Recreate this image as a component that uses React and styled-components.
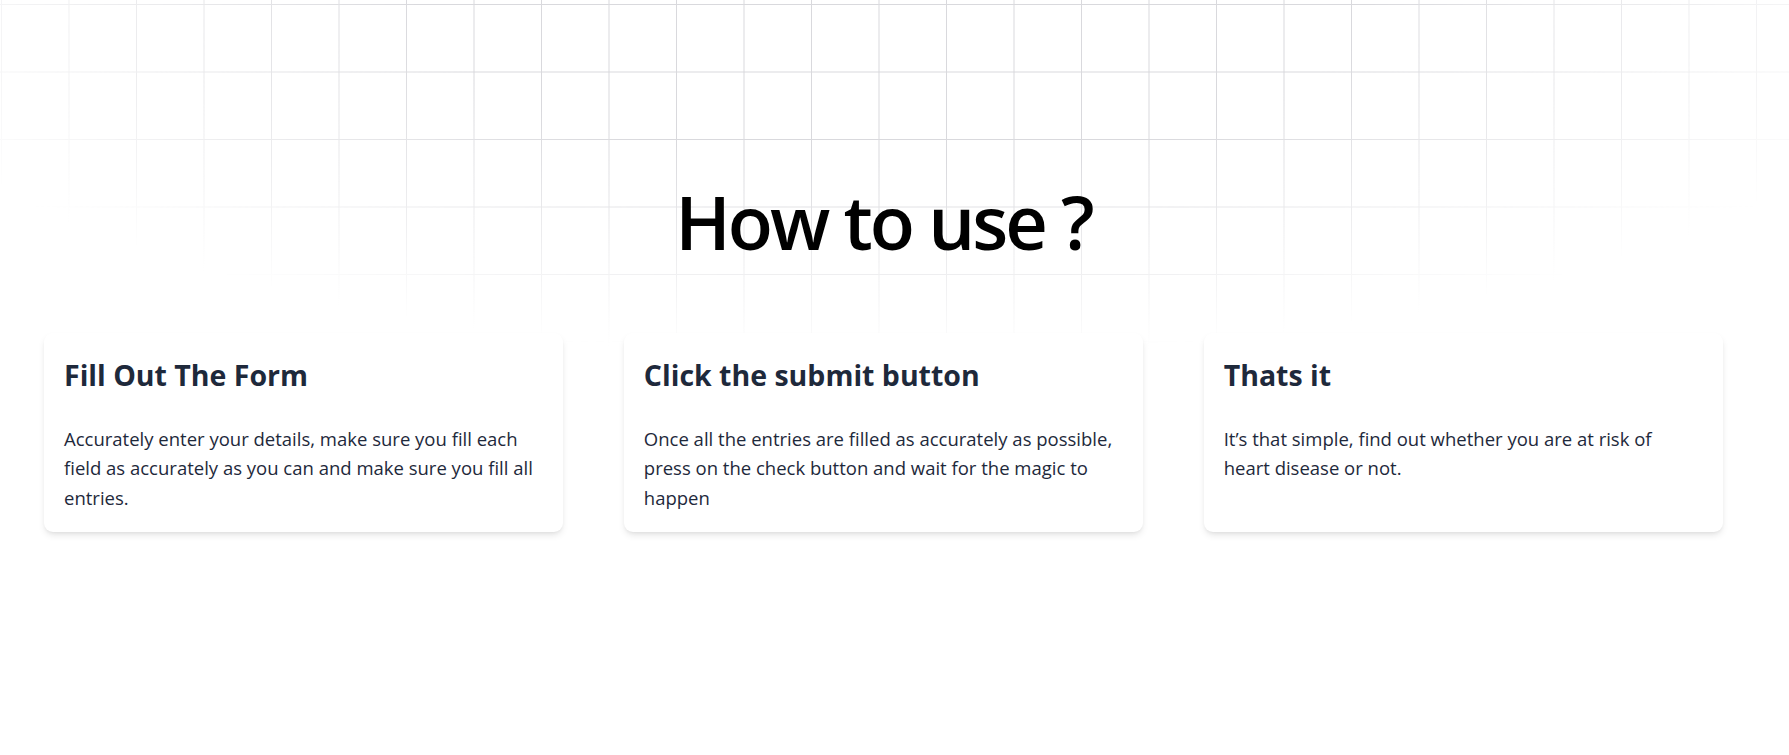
import React from "react";
import styled, { createGlobalStyle } from "styled-components";

const steps = [
  {
    title: "Fill Out The Form",
    text: "Accurately enter your details, make sure you fill each field as accurately as you can and make sure you fill all entries.",
  },
  {
    title: "Click the submit button",
    text: "Once all the entries are filled as accurately as possible, press on the check button and wait for the magic to happen",
  },
  {
    title: "Thats it",
    text: "It\u2019s that simple, find out whether you are at risk of heart disease or not.",
  },
];

export default function App() {
  return (
    <>
      <GlobalStyle />
      <Section>
        <Title>How to use ?</Title>
        <CardGrid>
          {steps.map((s) => (
            <Card key={s.title}>
              <CardTitle>{s.title}</CardTitle>
              <CardText>{s.text}</CardText>
            </Card>
          ))}
        </CardGrid>
      </Section>
    </>
  );
}

const GlobalStyle = createGlobalStyle`
  * { box-sizing: border-box; }
  html, body {
    margin: 0;
    padding: 0;
    background: #ffffff;
    font-family: "Open Sans", "Noto Sans", sans-serif;
  }
`;

const Section = styled.section`
  position: relative;
  min-height: 100vh;
  padding: 176px 66px 40px 44px;
  display: flex;
  flex-direction: column;
  overflow: hidden;

  /* faded grid behind the heading */
  &::before {
    content: "";
    position: absolute;
    left: 0;
    right: 0;
    top: 0;
    height: 380px;
    background-image:
      linear-gradient(to right, #d9d9dd 1px, transparent 1px),
      linear-gradient(to bottom, #d9d9dd 1px, transparent 1px);
    background-size: 67.5px 67.5px;
    background-position: 1px 4px;
    -webkit-mask-image: radial-gradient(ellipse 1050px 360px at 50% 0, #000 45%, transparent 100%);
    mask-image: radial-gradient(ellipse 1050px 360px at 50% 0, #000 45%, transparent 100%);
    pointer-events: none;
  }
`;

const Title = styled.h1`
  position: relative;
  margin: 0;
  text-align: center;
  font-size: 74px;
  line-height: 92px;
  font-weight: 600;
  color: #000;
  letter-spacing: -3px;
`;

const CardGrid = styled.div`
  position: relative;
  margin-top: 65px;
  display: grid;
  grid-template-columns: repeat(3, 1fr);
  column-gap: 60.5px;
`;

const Card = styled.div`
  background: #ffffff;
  border-radius: 9px;
  padding: 20px 26px 20px 20px;
  box-shadow: 0 4px 7px -1px rgba(0, 0, 0, 0.1), 0 2px 4px -2px rgba(0, 0, 0, 0.08);
`;

const CardTitle = styled.h2`
  margin: 0;
  font-size: 28.5px;
  line-height: 45px;
  font-weight: 700;
  color: #1e293b;
`;

const CardText = styled.p`
  margin: 26px 0 0;
  font-size: 18.5px;
  line-height: 29.25px;
  color: #1e293b;
`;
